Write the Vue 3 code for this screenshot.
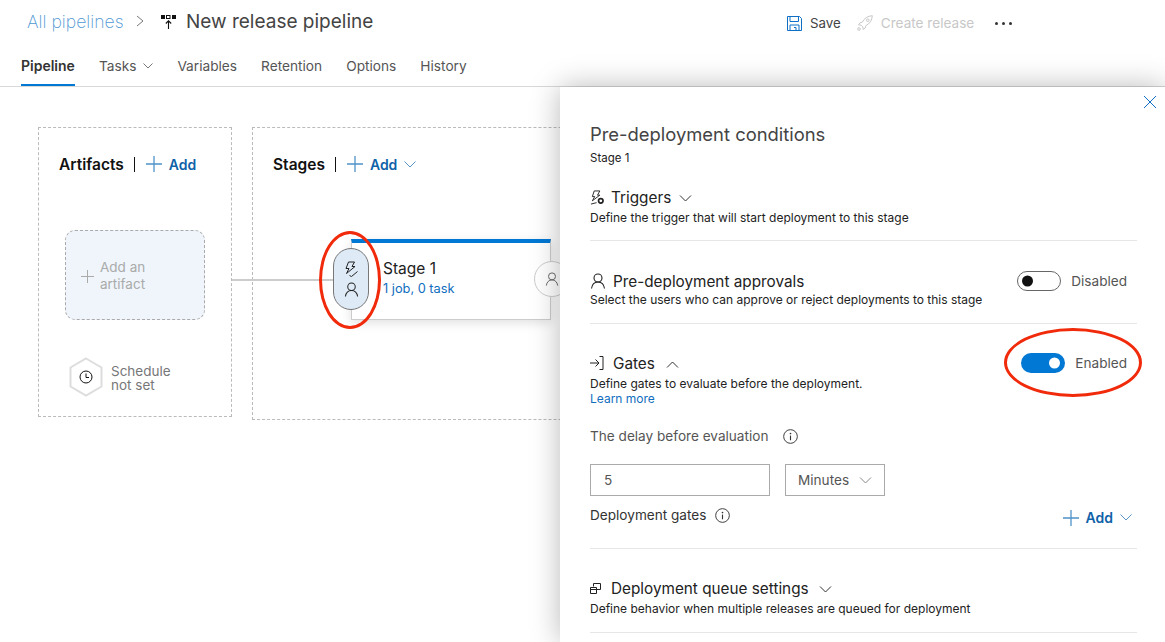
<script setup>
const tabs = [
  { name: 'Pipeline', active: true },
  { name: 'Tasks', menu: true },
  { name: 'Variables' },
  { name: 'Retention' },
  { name: 'Options' },
  { name: 'History' },
]
</script>

<template>
  <div class="page">
    <header class="header">
      <div class="title-row">
        <a class="crumb">All pipelines</a>
        <svg class="crumb-sep" viewBox="0 0 8 12" width="8" height="12"><path d="M1 1l6 5-6 5" fill="none" stroke="#777" /></svg>
        <svg class="pipe-icon" viewBox="0 0 15 15" width="15" height="15">
          <rect x="0" y="1" width="4" height="4" fill="#111" />
          <rect x="5.500" y="1.500" width="3.500" height="3" fill="none" stroke="#111" />
          <rect x="11" y="1" width="4" height="4" fill="#111" />
          <path d="M7.500 15V7M4.800 9.500l2.700-2.700 2.700 2.700" fill="none" stroke="#111" stroke-width="1.100" />
        </svg>
        <span class="title">New release pipeline</span>
        <div class="actions">
          <svg viewBox="0 0 15 15" width="15" height="15">
            <path d="M.5.500h12l2 2v12H.5z" fill="none" stroke="#0f6fc6" />
            <path d="M3 .5v5h8.500v-5M3 14.500V9h9v5.500M7 11.500h2v3" fill="none" stroke="#0f6fc6" />
          </svg>
          <span class="save">Save</span>
          <svg class="rocket" viewBox="0 0 16 16" width="16" height="16">
            <path d="M15.300.7c-4.800.3-8 2.500-10 6.500L3 7.800l-1.500 2 2.600.4 1.700 1.700.4 2.600 2-1.500.6-2.300c4-2 6.200-5.200 6.500-10z" fill="none" stroke="#c8c8c8" />
            <circle cx="10.800" cy="5.200" r="1.300" fill="none" stroke="#c8c8c8" />
            <circle cx="2" cy="14" r="1.300" fill="none" stroke="#c8c8c8" />
          </svg>
          <span class="create">Create release</span>
          <span class="dots"><i></i><i></i><i></i></span>
        </div>
      </div>
      <nav class="tabs">
        <a v-for="t in tabs" :key="t.name" class="tab" :class="{ active: t.active }">
          {{ t.name }}
          <svg v-if="t.menu" viewBox="0 0 10 6" width="10" height="6"><path d="M.5.500L5 5 9.500.5" fill="none" stroke="#777" /></svg>
        </a>
      </nav>
    </header>

    <main class="canvas">
      <section class="box artifacts">
        <div class="box-head">
          <h2>Artifacts</h2>
          <i class="pipe"></i>
          <span class="add">
            <svg viewBox="0 0 16 16" width="16" height="16"><path d="M0 8h16M8 0v16" stroke="#4f93c8" stroke-width="1.300" /></svg>
            <b>Add</b>
          </span>
        </div>
        <div class="artifact-card">
          <svg viewBox="0 0 13 13" width="13" height="13"><path d="M0 6.500h13M6.500 0v13" stroke="#aaa" /></svg>
          <span>Add an<br />artifact</span>
        </div>
        <div class="schedule">
          <svg viewBox="0 0 36 40" width="36" height="40">
            <path d="M18 1.500L33.500 10.500V29.500L18 38.500 2.500 29.500V10.500z" fill="#fff" stroke="#ddd" stroke-width="2" />
            <circle cx="18" cy="20" r="6" fill="none" stroke="#111" />
            <path d="M18 16.500V20.500h3" fill="none" stroke="#111" />
          </svg>
          <span>Schedule<br />not set</span>
        </div>
      </section>

      <section class="box stages">
        <div class="box-head">
          <h2>Stages</h2>
          <i class="pipe"></i>
          <span class="add">
            <svg viewBox="0 0 16 16" width="16" height="16"><path d="M0 8h16M8 0v16" stroke="#4f93c8" stroke-width="1.300" /></svg>
            <b>Add</b>
            <svg class="chev" viewBox="0 0 12 7" width="12" height="7"><path d="M.5.500L6 6 11.500.5" fill="none" stroke="#5a95c5" /></svg>
          </span>
        </div>
        <div class="stage-card">
          <div class="pill">
            <svg viewBox="0 0 16 16" width="16" height="16">
              <path d="M5.500 1h6L9 5.500h3L3.500 12.500l2.500-5H3z" fill="none" stroke="#222" />
              <path d="M6.500 14.500l2 1 6-5" fill="none" stroke="#222" />
            </svg>
            <svg viewBox="0 0 16 16" width="15" height="15">
              <circle cx="8" cy="5" r="4" fill="none" stroke="#222" stroke-width="1.100" />
              <path d="M1.500 15.500c.5-3.800 3-6.500 6.500-6.500s6 2.700 6.500 6.500" fill="none" stroke="#222" stroke-width="1.100" />
            </svg>
          </div>
          <div class="stage-name">Stage 1</div>
          <div class="stage-sub">1 job, 0 task</div>
          <div class="post">
            <svg viewBox="0 0 16 16" width="14" height="14">
              <circle cx="8" cy="5" r="4" fill="none" stroke="#666" stroke-width="1.100" />
              <path d="M1.500 15.500c.5-3.800 3-6.500 6.500-6.500s6 2.700 6.500 6.500" fill="none" stroke="#666" stroke-width="1.100" />
            </svg>
          </div>
        </div>
      </section>
      <i class="connector"></i>
      <i class="ring ring-stage"></i>
    </main>

    <aside class="panel">
      <svg class="close" viewBox="0 0 12 12" width="12" height="12"><path d="M0 0l12 12M12 0L0 12" stroke="#0f6fc6" /></svg>
      <h1>Pre-deployment conditions</h1>
      <p class="panel-sub">Stage 1</p>

      <div class="cond triggers">
        <div class="cond-head">
          <svg viewBox="0 0 16 16" width="15" height="15">
            <path d="M4.500 1h6L8 5.500h2.500L2.500 11.500 5 7H2.500z" fill="none" stroke="#222" />
            <path d="M1 15l6-1.500" fill="none" stroke="#222" />
            <circle cx="11.500" cy="11.500" r="2.400" fill="none" stroke="#222" stroke-width="1.800" />
          </svg>
          <span>Triggers</span>
          <svg class="chev" viewBox="0 0 12 7" width="13" height="7"><path d="M.5.500L6 6 11.500.5" fill="none" stroke="#333" /></svg>
        </div>
        <p class="desc">Define the trigger that will start deployment to this stage</p>
      </div>

      <div class="cond approvals">
        <div class="cond-row">
          <div>
            <div class="cond-head">
              <svg viewBox="0 0 16 16" width="16" height="16">
                <circle cx="8" cy="5" r="4" fill="none" stroke="#222" stroke-width="1.100" />
                <path d="M1.500 15.500c.5-3.800 3-6.500 6.500-6.500s6 2.700 6.500 6.500" fill="none" stroke="#222" stroke-width="1.100" />
              </svg>
              <span>Pre-deployment approvals</span>
            </div>
            <p class="desc">Select the users who can approve or reject deployments to this stage</p>
          </div>
          <div class="toggle-wrap">
            <i class="toggle off"></i>
            <span>Disabled</span>
          </div>
        </div>
      </div>

      <div class="cond gates">
        <div class="cond-row">
          <div>
            <div class="cond-head">
              <svg viewBox="0 0 14 14" width="14" height="14">
                <path d="M0 7h8.500M5.500 3.500L9 7l-3.500 3.500M9.500.5h3.500v13H9.500" fill="none" stroke="#222" />
              </svg>
              <span>Gates</span>
              <svg class="chev" viewBox="0 0 12 7" width="13" height="7"><path d="M.5 6.500L6 1l5.500 5.500" fill="none" stroke="#333" /></svg>
            </div>
            <p class="desc">Define gates to evaluate before the deployment.</p>
            <a class="learn">Learn more</a>
          </div>
          <div class="toggle-wrap">
            <i class="toggle on"></i>
            <span>Enabled</span>
          </div>
        </div>
        <div class="delay-label">
          <span>The delay before evaluation</span>
          <svg viewBox="0 0 16 16" width="15" height="15">
            <circle cx="8" cy="8" r="7.300" fill="none" stroke="#333" />
            <path d="M8 7v5" stroke="#333" stroke-width="1.200" />
            <circle cx="8" cy="4.800" r=".9" fill="#333" />
          </svg>
        </div>
        <div class="delay-inputs">
          <div class="field num">5</div>
          <div class="field unit">
            Minutes
            <svg viewBox="0 0 12 7" width="13" height="7"><path d="M.5.500L6 6 11.500.5" fill="none" stroke="#888" /></svg>
          </div>
        </div>
        <div class="gates-row">
          <div class="gates-label">
            <span>Deployment gates</span>
            <svg viewBox="0 0 16 16" width="15" height="15">
              <circle cx="8" cy="8" r="7.300" fill="none" stroke="#333" />
              <path d="M8 7v5" stroke="#333" stroke-width="1.200" />
              <circle cx="8" cy="4.800" r=".9" fill="#333" />
            </svg>
          </div>
          <span class="add">
            <svg viewBox="0 0 16 16" width="16" height="16"><path d="M0 8h16M8 0v16" stroke="#4f93c8" stroke-width="1.300" /></svg>
            <b>Add</b>
            <svg class="chev" viewBox="0 0 12 7" width="12" height="7"><path d="M.5.500L6 6 11.500.5" fill="none" stroke="#5a95c5" /></svg>
          </span>
        </div>
      </div>

      <div class="cond queue">
        <div class="cond-head">
          <svg viewBox="0 0 11 11" width="11" height="11">
            <path d="M3.500 3.500V.5h7v6h-4" fill="none" stroke="#222" />
            <path d="M.5 4.500h6v6h-6zM.5 6.500h6" fill="none" stroke="#222" />
          </svg>
          <span>Deployment queue settings</span>
          <svg class="chev" viewBox="0 0 12 7" width="13" height="7"><path d="M.5.500L6 6 11.500.5" fill="none" stroke="#333" /></svg>
        </div>
        <p class="desc">Define behavior when multiple releases are queued for deployment</p>
      </div>
      <i class="ring ring-toggle"></i>
    </aside>
  </div>
</template>

<style>
html, body { margin: 0; background: #fff; overflow: hidden; }
</style>

<style scoped>
.page {
  position: relative;
  width: 1165px;
  height: 642px;
  overflow: hidden;
  font-family: Inter, "Liberation Sans", sans-serif;
  color: #333;
}
h1, h2, p { margin: 0; font-weight: normal; }

.header { height: 87px; box-sizing: border-box; border-bottom: 1px solid #d8d8d8; }
.title-row { height: 42px; display: flex; align-items: center; padding-left: 27px; }
.crumb { width: 97px; font-size: 17.6px; font-weight: 200; color: #4f97d4; white-space: nowrap; }
.crumb-sep { margin-left: 12px; }
.pipe-icon { margin-left: 17px; }
.title { margin-left: 10px; font-size: 19px; color: #444; }
.actions { margin-left: auto; width: 378px; display: flex; align-items: center; font-size: 13.3px; padding-top: 4px; }
.save { margin-left: 8px; color: #444; }
.rocket { margin-left: 16px; }
.create { margin-left: 8px; color: #c8c8c8; font-size: 13.6px; }
.dots { margin-left: 21px; display: flex; gap: 4px; }
.dots i { width: 3px; height: 3px; background: #333; border-radius: 50%; }

.tabs { display: flex; gap: 24px; padding-left: 21px; }
.tab {
  height: 44px;
  box-sizing: border-box;
  padding-top: 14px;
  line-height: 20px;
  font-size: 13.7px;
  color: #555;
  border-bottom: 2px solid transparent;
  display: flex;
  align-items: baseline;
  gap: 7px;
}
.tab svg { transform: translateY(-2px); }
.tab.active { font-size: 14px; font-weight: 600; color: #333; border-bottom-color: #0078d4; }

.canvas {
  position: relative;
  display: flex;
  gap: 20px;
  padding: 40px 0 0 38px;
  color: #111;
}
.box { border: 1px dashed #bbb; box-sizing: border-box; padding-top: 26px; flex: none; }
.artifacts { width: 194px; height: 290px; }
.stages { width: 400px; height: 293px; }
.box-head { display: flex; align-items: center; height: 20px; padding-left: 20px; }
.box-head h2 { font-size: 15.5px; font-weight: 600; color: #111; }
.pipe { width: 1px; height: 15px; background: #111; margin: 0 11px 0 10px; }
.add { display: inline-flex; align-items: center; color: #0f62a8; font-size: 14px; }
.add b { font-weight: 600; margin-left: 7px; }
.add .chev { margin-left: 7px; }

.artifact-card {
  width: 140px;
  height: 90px;
  box-sizing: border-box;
  margin: 56px 0 0 26px;
  background: #eff5fb;
  border: 1px dashed #aaa;
  border-radius: 10px;
  display: flex;
  align-items: center;
  padding: 2px 0 0 15px;
  gap: 6px;
  font-size: 13.5px;
  line-height: 17px;
  color: #aaa;
}
.schedule {
  margin: 37px 0 0 29px;
  display: flex;
  align-items: center;
  gap: 7px;
  font-size: 13.5px;
  line-height: 14px;
  color: #777;
}
.schedule span { padding-top: 2px; }

.stage-card {
  position: relative;
  width: 200px;
  height: 81px;
  box-sizing: border-box;
  margin: 65px 0 0 98px;
  padding: 16px 0 0 31px;
  background: #fff;
  border: 1px solid #ccc;
  border-top: 4px solid #0078d4;
  box-shadow: 0 3px 10px rgba(0, 0, 0, .12);
}
.pill {
  position: absolute;
  left: -19px;
  top: 5px;
  width: 36px;
  height: 62px;
  box-sizing: border-box;
  background: #deeaf6;
  border: 1px solid #777;
  border-radius: 18px;
  display: flex;
  flex-direction: column;
  align-items: center;
  justify-content: center;
  gap: 5px;
}
.stage-name { font-size: 15.5px; line-height: 20px; color: #222; }
.stage-sub { font-size: 12.8px; line-height: 20px; color: #106ebe; }
.post {
  position: absolute;
  right: -20px;
  top: 18px;
  width: 36px;
  height: 36px;
  box-sizing: border-box;
  background: #fff;
  border: 1px solid #ccc;
  border-radius: 50%;
  display: flex;
  align-items: center;
  justify-content: center;
}
.connector {
  position: absolute;
  left: 232px;
  top: 192px;
  width: 101px;
  height: 2px;
  background: #ccc;
}
.ring {
  position: absolute;
  box-sizing: border-box;
  border: 3.500px solid #f02a0a;
  border-radius: 50%;
  z-index: 3;
}
.ring-stage { left: 319px; top: 144px; width: 62px; height: 98px; }

.panel {
  position: absolute;
  top: 87px;
  left: 560px;
  width: 605px;
  height: 555px;
  box-sizing: border-box;
  padding: 35px 28px 0 30px;
  background: #fff;
  box-shadow: 0 0 28px rgba(0, 0, 0, .28);
  font-size: 13.6px;
}
.close { position: absolute; top: 9px; right: 9px; }
.panel h1 { font-size: 18.4px; line-height: 24px; color: #444; }
.panel-sub { margin-top: 4px; font-size: 11.5px; line-height: 16px; color: #222; }

.cond { border-bottom: 1px solid #e6e6e6; padding-bottom: 16px; }
.triggers { margin-top: 21px; padding-bottom: 14px; }
.triggers .desc { margin-top: 3px; }
.approvals { padding-top: 30px; padding-bottom: 15px; }
.approvals .desc { margin-top: 1px; }
.gates { padding-top: 29px; padding-bottom: 22px; }
.queue { padding-top: 29px; padding-bottom: 15px; }
.queue .desc { margin-top: 3px; }
.cond-row { display: flex; justify-content: space-between; align-items: flex-start; }
.cond-head { display: flex; align-items: center; height: 20px; gap: 6px; font-size: 15.3px; color: #222; }
.approvals .cond-head { gap: 7px; }
.gates .cond-head { gap: 9px; }
.queue .cond-head { gap: 10px; }
.cond-head .chev { margin-left: 2px; margin-top: 3px; }
.queue .cond-head .chev { margin-left: 0; }
.desc { font-size: 12px; line-height: 16px; color: #222; }
.gates .desc { margin-top: 3px; }
.learn { display: block; margin-top: -1px; font-size: 12px; line-height: 16px; color: #106ebe; }

.toggle-wrap { display: flex; align-items: center; gap: 10px; height: 20px; font-size: 13.6px; color: #555; margin-right: 10px; }
.toggle {
  position: relative;
  width: 44px;
  height: 20px;
  box-sizing: border-box;
  border-radius: 10px;
  display: block;
}
.toggle::after { content: ""; position: absolute; top: 50%; transform: translateY(-50%); border-radius: 50%; }
.toggle.off { border: 1px solid #666; background: #fff; }
.toggle.off::after { left: 4px; width: 11px; height: 11px; background: #111; }
.toggle.on { background: #0078d4; }
.toggle.on::after { right: 5px; width: 11px; height: 11px; background: #fff; }
.ring-toggle { left: 444px; top: 241px; width: 138px; height: 69px; }

.delay-label { display: flex; align-items: center; gap: 15px; margin-top: 21px; line-height: 16px; color: #555; }
.delay-inputs { display: flex; gap: 15px; margin-top: 20px; }
.field {
  height: 32px;
  box-sizing: border-box;
  border: 1px solid #aaa;
  display: flex;
  align-items: center;
  color: #555;
}
.num { width: 180px; padding-left: 13px; }
.unit { width: 100px; padding: 0 12px; justify-content: space-between; }
.gates-row { display: flex; justify-content: space-between; align-items: flex-start; margin-top: 11px; }
.gates-label { display: flex; align-items: center; gap: 9px; line-height: 16px; color: #333; }
.gates-row .add { margin-top: 2px; margin-right: 5px; }
</style>
